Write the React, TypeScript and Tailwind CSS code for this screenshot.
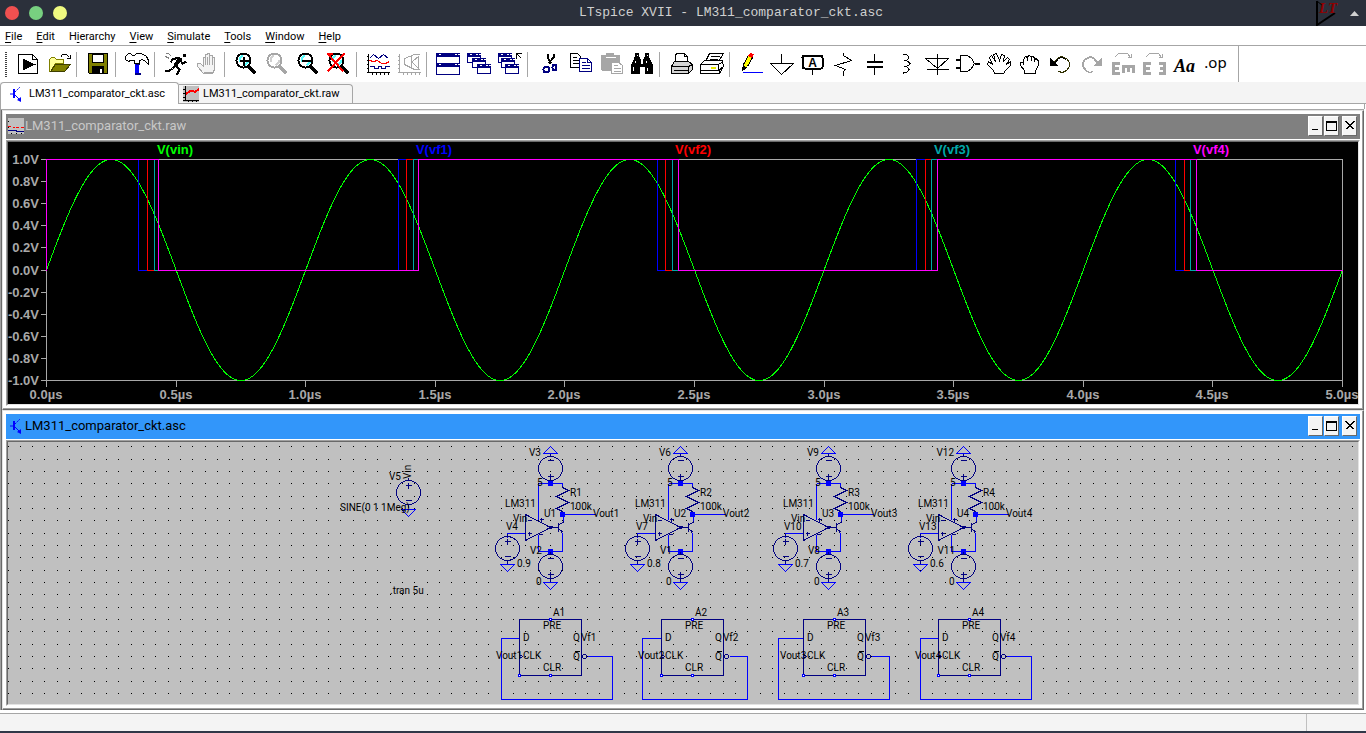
import { ReactNode } from "react";

const NAVY = "#000080";
const BLUE = "#0000ff";
const GRAY = "#a6a6a6";

const MENUS = [
  ["", "F", "ile"],
  ["", "E", "dit"],
  ["H", "i", "erarchy"],
  ["", "V", "iew"],
  ["", "S", "imulate"],
  ["", "T", "ools"],
  ["", "W", "indow"],
  ["", "H", "elp"],
];

/* ---------- toolbar icons ---------- */

const Magnifier = ({ color = "#000", glass = "#55ffff", children }: { color?: string; glass?: string; children?: ReactNode }) => (
  <>
    <path d="M15 14L22 21" stroke={color} strokeWidth="3" />
    <circle cx="10" cy="8" r="7" fill="#fff" stroke={color} strokeWidth="2" />
    <path d="M6 9V6L9 3M14 7V10L11 13" stroke={glass} strokeWidth="2" />
    {children}
  </>
);

const MiniWindow = ({ x, y, w, h }: { x: number; y: number; w: number; h: number }) => (
  <>
    <rect x={x} y={y} width={w} height={h} fill="#fff" stroke={NAVY} />
    <path d={`M${x} ${y + 1}H${x + w}M${x} ${y + 2}H${x + w}M${x} ${y + 3}H${x + w}`} stroke={NAVY} />
    <path d={`M${x + 2} ${y + 1}h2M${x + w - 5} ${y + 1}h2M${x + w - 2} ${y + 1}h2`} stroke="#fff" />
  </>
);

const ICONS: Record<string, ReactNode> = {
  Run: (
    <>
      <path d="M3 2H17L22 7V21H3Z" fill="#fff" stroke="#000" />
      <path d="M17 2V7H22" stroke="#000" />
      <path d="M8 7V17L19 12Z" fill="#000" stroke="#000" />
    </>
  ),
  Open: (
    <>
      <path d="M3 19V7L5 5H8L10 7H17V11H9L4 19Z" fill="#ffff99" stroke="#808000" />
      <path d="M4 19L9 12H24L18 19Z" fill="#808000" stroke="#404000" />
      <path d="M14 5L16 2H20L23 5M24 2V6H20" stroke="#000" />
    </>
  ),
  Save: (
    <>
      <path d="M3 1H22V21H4L3 20Z" fill="#808000" stroke="#000" />
      <rect x="7" y="2" width="11" height="8" fill="#fff" stroke="#000" />
      <rect x="7" y="14" width="11" height="7" fill="#000" stroke="#000" />
      <path d="M15 16V20M16 16V20" stroke="#fff" />
    </>
  ),
  "Control panel": (
    <>
      <path d="M11 10V22M12 10V22M13 10V22M14 10V22" stroke={BLUE} />
      <path d="M11 12H15M10 21H16M10 22H16" stroke={NAVY} />
      <path d="M1 4L4 1H6L8 3H10L12 1H17L22 4L24 8V12L21 9L18 7L15 8V11H10V8H6L4 9L1 7Z" fill="#fff" stroke="#000" />
    </>
  ),
  Simulate: (
    <>
      <path d="M19 2H22M19 3H22" stroke="#000" strokeWidth="2" />
      <path d="M17 5L12 13" stroke="#000" strokeWidth="4" />
      <path d="M15 5L9 7L7 10M17 8L19 11L23 9M12 13L16 17L14 21H12M12 13L9 16L6 18H1" stroke="#000" strokeWidth="2" />
      <path d="M2 1H5L8 4M2 4L6 6" stroke="#808080" />
    </>
  ),
  Halt: (
    <>
      <path d="M9 21L3 14V11H6L9 14V5H11V2H13V1H15V3H18V5H20V17L18 21Z" fill="#f4f4f4" stroke={GRAY} />
      <path d="M11 5V12M15 3V12M18 5V12M13 4V12M9 21H18M9 20H18" stroke={GRAY} />
    </>
  ),
  "Zoom in": (
    <Magnifier>
      <path d="M6 8H15M10 4V13" stroke="#000" strokeWidth="2" />
    </Magnifier>
  ),
  Pan: <Magnifier color={GRAY} glass="#d0d0d0" />,
  "Zoom out": (
    <Magnifier>
      <path d="M6 8H15" stroke="#000" strokeWidth="2" />
    </Magnifier>
  ),
  "Zoom to fit": (
    <Magnifier>
      <path d="M1 1L17 19M18 1L1 19M2 1H6M14 5L9 10" stroke="#f00" strokeWidth="2" />
    </Magnifier>
  ),
  "Autorange plot": (
    <>
      <path d="M3 1V20M1 20H24M1 4H3M1 8H3M1 12H3M1 16H3M7 20V22M11 20V22M15 20V22M19 20V22M23 20V22" stroke="#000" />
      <path d="M4 6L8 2L13 6L18 2L23 6M4 14H9V16H13V14H16V16H20V14H24" stroke={NAVY} />
      <path d="M4 8L8 9L12 8L16 11H20L24 9" stroke="#f00" />
    </>
  ),
  "Smith chart": (
    <>
      <path d="M3 1V20M1 20H24M1 4H3M1 8H3M1 12H3M1 16H3M7 20V22M11 20V22M15 20V22M19 20V22M23 20V22" stroke={GRAY} />
      <path d="M23 2H18L8 6V12L18 17H23M15 3V16M16 9L22 4V16L16 10" stroke={GRAY} />
    </>
  ),
  "Tile windows": (
    <>
      <MiniWindow x={1} y={1} w={23} h={10} />
      <MiniWindow x={1} y={11} w={23} h={11} />
    </>
  ),
  "Cascade windows": (
    <>
      <MiniWindow x={1} y={1} w={13} h={9} />
      <MiniWindow x={6} y={6} w={13} h={9} />
      <MiniWindow x={11} y={12} w={13} h={9} />
    </>
  ),
  "Close windows": (
    <>
      <MiniWindow x={1} y={1} w={13} h={9} />
      <MiniWindow x={4} y={6} w={13} h={9} />
      <MiniWindow x={8} y={12} w={13} h={9} />
      <path d="M19 6V1H24M19 1L24 6" stroke="#000" />
    </>
  ),
  Cut: (
    <>
      <path d="M11 1V5L15 11M17 1V5L12 11" stroke="#000" strokeWidth="2" />
      <ellipse cx="10" cy="17" rx="3" ry="3" stroke={NAVY} strokeWidth="2" />
      <ellipse cx="18" cy="15" rx="2" ry="3" stroke={NAVY} strokeWidth="2" />
    </>
  ),
  Copy: (
    <>
      <path d="M3 1H10L13 4V15H3Z" fill="#fff" stroke="#000" />
      <path d="M5 5H9M5 8H11M5 11H11" stroke="#000" />
      <path d="M12 6H20L24 10V19H12Z" fill="#fff" stroke={NAVY} />
      <path d="M20 6V10H24M14 10H18M14 13H22M14 16H22" stroke={NAVY} />
    </>
  ),
  Paste: (
    <>
      <path d="M3 3H8V1H15V3H21V18H4L3 17Z" fill={GRAY} stroke={GRAY} />
      <path d="M7 5H17" stroke="#fff" />
      <path d="M13 10H20L24 13V21H13Z" fill="#fff" stroke={GRAY} />
      <path d="M15 13H19M15 16H22M15 19H22" stroke={GRAY} />
    </>
  ),
  Find: (
    <>
      <path d="M6 1H9V4L11 7V12H14V7L16 4V1H19V4L23 13V21H16V14H10V21H2V13L6 4Z" fill="#000" stroke="#000" />
      <path d="M7 3H8M17 3H18M6 8V10M17 8V10M4 14V18M18 15V18" stroke="#fff" />
    </>
  ),
  Print: (
    <>
      <path d="M7 10V3L8 1H16L19 4V10" fill="#fff" stroke="#000" />
      <path d="M3 14L6 9H20L24 12V17L20 21H3Z" fill="#d4d4d4" stroke="#000" />
      <path d="M3 14H20V21M5 18H20M20 14L24 12M16 1V4H19" stroke="#000" />
    </>
  ),
  "Print setup": (
    <>
      <path d="M6 9L10 1H24L19 9" fill="#fff" stroke="#000" />
      <path d="M11 4H20M10 7H18" stroke="#000" />
      <path d="M1 12L5 8H23L24 14L20 21H1Z" fill="#fff" stroke="#000" />
      <path d="M1 12H19L24 9M1 18H20V21M19 12V18L24 14" stroke="#000" />
      <path d="M11 15H16" stroke="#e8e800" strokeWidth="2" />
    </>
  ),
  Wire: (
    <>
      <path d="M4 18L5 12L10 3L14 5L9 14Z" fill="#ffff00" stroke="#000" />
      <path d="M4 18L5 14L8 15Z" fill="#000" stroke="#000" />
      <path d="M10 3L12 1L15 2L13 5Z" fill="#f00" stroke="#f00" />
      <path d="M4 20H25" stroke={BLUE} />
    </>
  ),
  Ground: <path d="M12 1V11M1 11H24L12 22L1 11" stroke="#000" />,
  "Label net": (
    <>
      <rect x="2" y="3" width="20" height="13" rx="2" stroke="#000" strokeWidth="2" />
      <path d="M12 17V22" stroke="#000" />
      <text x="12" y="14" textAnchor="middle" fontSize="12" fontWeight="700" fill="#000" fontFamily="Liberation Sans, sans-serif">A</text>
    </>
  ),
  Resistor: <path d="M12 0V3L20 8L4 13L14 17L12 19V23" stroke="#000" />,
  Capacitor: (
    <>
      <path d="M12 1V8M12 15V22" stroke="#000" />
      <path d="M4 9H20M4 14H20" stroke="#000" strokeWidth="2" />
    </>
  ),
  Inductor: (
    <path
      d="M10 1V2H13L15 4V6L13 8H10M13 8L16 10V12L13 14H10M13 14L15 16V18L13 20H10V21M14 3L16 5M15 10L17 11L15 13M14 15L16 17L14 19"
      stroke="#000"
    />
  ),
  Diode: <path d="M13 1V22M1 6H24L13 16ZM2 17H24" stroke="#000" />,
  Component: (
    <>
      <path d="M5 3H12L16 6L19 11L16 16L12 19H5Z" stroke="#000" />
      <path d="M0 7H5M0 15H5M19 11H24" stroke="#000" strokeWidth="2" />
    </>
  ),
  Move: (
    <path
      d="M8 21L7 18L1 12L2 9L6 12L3 5L5 3L9 9L7 2L10 1L13 8L15 2L18 3L17 9L21 5L23 7L20 12L24 9V13L19 18L17 21Z"
      fill="#fff"
      stroke="#000"
    />
  ),
  Drag: <path d="M7 21V18L3 13V10H6V12V7L8 4L10 5V8V4L12 3L14 5V8V4L16 4L17 6V9L18 6L20 7L21 9V13L18 18V21Z" fill="#fff" stroke="#000" />,
  Undo: (
    <>
      <path d="M5 11L9 6L13 4L18 6L21 10V14L18 18L14 20L10 19" stroke="#303000" />
      <path d="M6 11L10 6L13 5L18 7" stroke="#000" />
      <path d="M2 6V13H9Z" fill="#000" stroke="#000" />
    </>
  ),
  Redo: (
    <>
      <path d="M19 11L15 6L11 4L6 6L3 10V14L6 18L10 20L14 19" stroke={GRAY} />
      <path d="M18 11L14 6L11 5L6 7L4 10V14L7 18" stroke={GRAY} />
      <path d="M22 6V13H15Z" fill={GRAY} stroke={GRAY} />
    </>
  ),
  Rotate: (
    <>
      <path d="M4 5L8 1H17L20 5M21 1V5H17" stroke={GRAY} />
      <path d="M9 11H3V21H9M3 16H8M13 20V14H24M23 14V20M18 14V19" stroke={GRAY} strokeWidth="3" />
    </>
  ),
  Mirror: (
    <>
      <path d="M4 5L8 1H17L20 5M21 1V5H17" stroke={GRAY} />
      <path d="M9 11H3V21H9M3 16H8M17 11H23V21H17M23 16H18" stroke={GRAY} strokeWidth="3" />
    </>
  ),
};

const TOOL_GROUPS = [
  ["Run", "Open"],
  ["Save"],
  ["Control panel"],
  ["Simulate", "Halt"],
  ["Zoom in", "Pan", "Zoom out", "Zoom to fit"],
  ["Autorange plot", "Smith chart"],
  ["Tile windows", "Cascade windows", "Close windows"],
  ["Cut", "Copy", "Paste", "Find"],
  ["Print", "Print setup"],
  ["Wire", "Ground", "Label net", "Resistor", "Capacitor", "Inductor", "Diode", "Component", "Move", "Drag", "Undo", "Redo", "Rotate", "Mirror"],
];

const TransistorIcon = () => (
  <svg width="16" height="16" viewBox="0 0 16 16" fill="none" stroke={BLUE} aria-hidden="true">
    <path d="M2 8H6M7 9L11 13" strokeWidth="1" />
    <path d="M6 3V12" strokeWidth="2" />
    <path d="M7 6L12 1" strokeDasharray="2 1" />
    <path d="M13 16V11L9 14Z" fill={BLUE} stroke="none" />
  </svg>
);

const WaveIcon = () => (
  <svg width="16" height="16" viewBox="0 0 16 16" fill="none" shapeRendering="crispEdges" aria-hidden="true">
    <path d="M0 0H16V16H0Z" fill="#c0c0c0" />
    <path d="M2 0V14M0 14H16M0 3H2M0 7H2M0 11H2M5 14V16M9 14V16M13 14V16" stroke="#000" />
    <path d="M3 8L7 5H10L12 6L16 3" stroke="#f00" strokeWidth="2" />
  </svg>
);

const PlotDocIcon = () => (
  <svg width="16" height="16" viewBox="0 0 16 16" fill="none" shapeRendering="crispEdges" aria-hidden="true">
    <path d="M0 0H16V16H0Z" fill="#c0c0c0" />
    <path d="M0 8.500H3M5 9.500H7M8 9.500H11M13 9.500H16" stroke="#f00" />
    <path d="M0 12.500H8V13.500H16" stroke={NAVY} />
    <path d="M3 15.500h1M8 15.500h1M13 15.500h1M0 3.500h1M0 9.500h1" stroke="#000" />
  </svg>
);

/* ---------- windows ---------- */

interface DocWindowProps {
  title: string;
  icon: ReactNode;
  active?: boolean;
  children: ReactNode;
}

const CAPTION_ICONS: Record<string, string> = {
  Minimize: "M2 12H8",
  Maximize: "M1 4H11V13H1ZM1 5H11",
  Close: "M2 4L10 12M10 4L2 12M3 4L11 12M11 4L3 12",
};

const CaptionButton = ({ label }: { label: string }) => (
  <button
    type="button"
    aria-label={label}
    className="flex h-5 w-[15px] items-start justify-center border border-t-white border-r-[#696969] border-b-[#696969] border-l-white bg-[#f4f4f4]">
    <svg width="13" height="18" viewBox="0 0 13 18" className="shrink-0" fill="none" stroke="#000" shapeRendering="crispEdges">
      <path transform="translate(.5 .5)" d={CAPTION_ICONS[label]} />
    </svg>
  </button>
);

const DocWindow = ({ title, icon, active, children }: DocWindowProps) => (
  <section className="border-t border-r border-b border-l border-t-[#e3e3e3] border-r-[#696969] border-b-[#696969] border-l-[#e3e3e3] bg-white">
    <div className="border-r border-b border-r-[#a0a0a0] border-b-[#a0a0a0] pt-[3px] pr-0.5 pb-0.5 pl-[3px]">
      <header
        className={`flex h-[25px] items-center pr-[3px] pb-px pl-0.5 ${active ? "bg-[#3296fa] text-black" : "bg-[#808080] text-[#c8c8c8]"}`}>
        {icon}
        <h2 className="ml-px flex-1 text-[13px]">{title}</h2>
        <CaptionButton label="Minimize" />
        <span className="w-px" />
        <CaptionButton label="Maximize" />
        <span className="w-[3px]" />
        <CaptionButton label="Close" />
      </header>
      <div className="mt-px border border-t-[#a0a0a0] border-r-white border-b-white border-l-[#a0a0a0]">
        <div className="border border-t-[#696969] border-r-[#e3e3e3] border-b-[#e3e3e3] border-l-[#696969]">{children}</div>
      </div>
    </div>
  </section>
);

/* ---------- waveform plot ---------- */

const PLOT = { left: 38, right: 1334, top: 17, zero: 128, bottom: 238 };
const PER_US = (PLOT.right - PLOT.left) / 5;

const sinePath = () => {
  const points: string[] = [];
  for (let x = PLOT.left; x <= PLOT.right; x++) {
    const v = Math.sin((2 * Math.PI * (x - PLOT.left)) / PER_US);
    points.push(`${x} ${(127.5 - 110.5 * v).toFixed(2)}`);
  }
  return `M${points.join("L")}`;
};

// x positions where each output toggles: fall, rise, fall, rise, fall
const TRACES = [
  { name: "V(vf1)", color: "#0000ff", edges: [130, 390, 649, 908, 1167] },
  { name: "V(vf2)", color: "#ff0000", edges: [139, 398, 657, 917, 1176] },
  { name: "V(vf3)", color: "#00a8a8", edges: [146, 405, 664, 923, 1182] },
  { name: "V(vf4)", color: "#ff00ff", edges: [150, 410, 670, 929, 1188] },
];

const squarePath = (edges: number[]) => {
  let d = `M${PLOT.left} ${PLOT.zero}V${PLOT.top}`;
  edges.forEach((x, i) => {
    d += `H${x}V${i % 2 ? PLOT.top : PLOT.zero}`;
  });
  return `${d}H${PLOT.right}`;
};

const LEGEND = [{ name: "V(vin)", color: "#00ff00" }, ...TRACES];

const Plot = () => (
  <svg viewBox="0 0 1350 262" className="block w-full bg-black" fontFamily="Liberation Sans, Arial, sans-serif" fontSize="13" fontWeight="700">
    <g transform="translate(.5 .5)" fill="none" shapeRendering="crispEdges">
      <rect x={PLOT.left} y={PLOT.top} width={PLOT.right - PLOT.left} height={PLOT.bottom - PLOT.top} stroke="#a8a8a8" />
      {Array.from({ length: 11 }, (_, i) => (
        <path key={i} d={`M32 ${Math.round(17 + i * 22.11)}H38M${Math.round(38 + i * 129.6)} 238V244`} stroke="#a8a8a8" />
      ))}
      <path d={sinePath()} stroke="#00ff00" />
      {TRACES.map((trace) => (
        <path key={trace.name} d={squarePath(trace.edges)} stroke={trace.color} />
      ))}
    </g>
    {LEGEND.map((item, i) => (
      <text key={item.name} x={167 + i * 259} y="12" textAnchor="middle" fill={item.color}>
        {item.name}
      </text>
    ))}
    <g fill="#a8a8a8">
      {Array.from({ length: 11 }, (_, i) => (
        <text key={i} x="31" y={Math.round(22 + i * 22.11)} textAnchor="end">
          {`${((5 - i) / 5).toFixed(1)}V`}
        </text>
      ))}
      {Array.from({ length: 11 }, (_, i) => (
        <text key={i} x={Math.round(38 + i * 129.6)} y="257" textAnchor="middle">
          {`${(i / 2).toFixed(1)}µs`}
        </text>
      ))}
    </g>
  </svg>
);

/* ---------- schematic ---------- */

const gridDots = () => {
  let d = "";
  for (let row = 0; row < 21; row++) {
    for (let col = 0; col < 110; col++) {
      d += `M${Math.max(0, Math.floor(col * 12.3334 - 0.3))} ${4 + Math.floor(row * 12.3334 + 0.67)}h1`;
    }
  }
  return d;
};

// Voltage source centred on x, y; flipped puts the minus sign on top.
const Source = ({ x, y, flipped }: { x: number; y: number; flipped?: boolean }) => (
  <g transform={`translate(${x} ${y})`} stroke={NAVY}>
    <circle r="12" />
    <path d={flipped ? "M-3 -8H3M-3 8H3M0 5V11" : "M-3 -7H3M0 -10V-4M-3 8H3"} />
    <path d="M0 -15V-12M0 12V15" />
  </g>
);

const Ground = ({ x, y, up }: { x: number; y: number; up?: boolean }) => (
  <path d={`M${x - 7} ${y}H${x + 7}L${x} ${up ? y - 7 : y + 7}Z`} stroke={BLUE} />
);

const Joint = ({ x, y }: { x: number; y: number }) => <rect x={x - 2} y={y - 2} width="4" height="4" fill={BLUE} stroke={BLUE} />;

interface StageProps {
  dx: number;
  n: number;
  top: string;
  bottom: string;
  level: string;
  source: string;
}

const STAGES: StageProps[] = [
  { n: 1, dx: 0, top: "V3", bottom: "V2", source: "V4", level: "0.9" },
  { n: 2, dx: 130, top: "V6", bottom: "V1", source: "V7", level: "0.8" },
  { n: 3, dx: 278, top: "V9", bottom: "V8", source: "V10", level: "0.7" },
  { n: 4, dx: 413, top: "V12", bottom: "V11", source: "V13", level: "0.6" },
];

const Stage = ({ dx, n, top, bottom, source, level }: StageProps) => (
  <g transform={`translate(${dx} 0)`}>
    <g transform="translate(.5 .5)" fill="none" shapeRendering="crispEdges">
      <Ground x={542} y={11} up />
      <Source x={542} y={26} flipped />
      <path d="M530 41H554M530 41V77M554 41V43M554 72H587M555 74V78M530 109H554M530 92V109M554 90V109M517 91H499V95" stroke={BLUE} />
      <path d="M554 43V45L560 48L548 54L560 60L548 66L554 69V72" stroke={NAVY} />
      <path d="M517 72V98L542 85ZM542 85H550M555 78V80L550 82M550 80V89M550 86L554 90M519 78H523M519 91H523M521 89V93M531 77H535M533 75V79M530 92H534M552 89H554M553 87V90M541 84H544M541 86H543" stroke={NAVY} />
      <Joint x={542} y={41} />
      <Joint x={554} y={72} />
      <Joint x={542} y={109} />
      <Source x={542} y={124} flipped />
      <Ground x={542} y={140} />
      <Source x={499} y={106} />
      <Ground x={499} y={122} />
    </g>
    <text x="533" y="14" textAnchor="end">{top}</text>
    <text x="529" y="44">5</text>
    <text x="497" y="65">LM311</text>
    <text x="536" y="75">U{n}</text>
    <text x="562" y="54">R{n}</text>
    <text x="562" y="68">100k</text>
    <text x="585" y="75">Vout{n}</text>
    <text x="505" y="80">Vin</text>
    <text x="498" y="88">{source}</text>
    <text x="509" y="125">{level}</text>
    <text x="534" y="112" textAnchor="end">{bottom}</text>
    <text x="528" y="143">0</text>
  </g>
);

const FLIPFLOPS = [
  { n: 1, x: 511, left: 493, right: 604 },
  { n: 2, x: 653, left: 634, right: 739 },
  { n: 3, x: 795, left: 770, right: 881 },
  { n: 4, x: 930, left: 912, right: 1023 },
];

const FlipFlop = ({ n, x, left, right }: { n: number; x: number; left: number; right: number }) => (
  <>
    <g transform="translate(.5 .5)" fill="none" shapeRendering="crispEdges">
      <path d={`M${x} 196H${left}V257H${right}V214H${x + 68}`} stroke={BLUE} />
      <rect x={x} y="177" width="62" height="56" stroke={NAVY} />
      <circle cx={x + 65} cy="214" r="2" stroke={NAVY} />
      <path d={`M${x} 212L${x + 3} 214L${x} 216`} stroke={NAVY} />
      <path d={`M${x + 55} 209H${x + 60}`} stroke="#000" />
      {[[31, 177], [0, 233], [31, 233]].map(([px, py]) => (
        <rect key={`${px}-${py}`} x={x + px - 1} y={py - 1} width="2" height="2" fill="#fff" stroke={BLUE} />
      ))}
    </g>
    <g transform={`translate(${x} 0)`}>
      <text x="34" y="174">A{n}</text>
      <text x="24" y="187">PRE</text>
      <text x="4" y="199">D</text>
      <text x="54" y="199">Q</text>
      <text x="62" y="199">Vf{n}</text>
      <text x="-23" y="217">Vout{n}</text>
      <text x="4" y="217">CLK</text>
      <text x="54" y="218">Q</text>
      <text x="24" y="229">CLR</text>
    </g>
  </>
);

const Schematic = () => (
  <svg viewBox="0 0 1350 262" className="block w-full bg-[#c0c0c0]" fontFamily="Roboto, sans-serif" fontSize="10" fill="#000">
    <path d={gridDots()} transform="translate(0 .5)" stroke="#000" shapeRendering="crispEdges" />
    <g transform="translate(.5 .5)" fill="none" shapeRendering="crispEdges">
      <Source x={400} y={50} />
      <Ground x={400} y={67} />
    </g>
    <text transform="translate(403 37) rotate(-90)">Vin</text>
    <text x="381" y="38">V5</text>
    <text x="332" y="69">SINE(0 1 1Meg)</text>
    <text x="382" y="152">.tran 5u</text>
    {STAGES.map((stage) => (
      <Stage key={stage.n} {...stage} />
    ))}
    {FLIPFLOPS.map((item) => (
      <FlipFlop key={item.n} {...item} />
    ))}
  </svg>
);

/* ---------- app ---------- */

const App = () => (
  <div className="flex min-h-screen flex-col bg-white font-[Roboto,sans-serif] text-[11px] text-black">
    <header className="flex h-[26px] items-center bg-[#2b303b] px-[5px]">
      <div className="flex flex-1 gap-2.5">
        <button type="button" aria-label="Close window" className="size-3.5 rounded-full bg-[#f05050]" />
        <button type="button" aria-label="Minimize window" className="size-3.5 rounded-full bg-[#78d080]" />
        <button type="button" aria-label="Maximize window" className="size-3.5 rounded-full bg-[#f0fa80]" />
      </div>
      <h1 className="ml-24 font-['Liberation_Mono',monospace] text-[13px] text-[#d0d0d0]">LTspice XVII - LM311_comparator_ckt.asc</h1>
      <div className="flex flex-1 items-center justify-end gap-2.5">
        <svg width="24" height="26" viewBox="0 0 24 26" fill="none" aria-hidden="true">
          <path d="M1 1V25L19 13" stroke="#000" strokeWidth="2" />
          <path d="M1 1L7 6" stroke="#000" />
          <text x="3" y="13" fontFamily="Liberation Serif, serif" fontSize="15" fontWeight="700" fontStyle="italic" fill="#900000">LT</text>
        </svg>
        <svg width="9" height="5" viewBox="0 0 9 5" aria-hidden="true" className="mr-0.5">
          <path d="M0 5L4.500 0L9 5Z" fill="#d0d0d0" />
        </svg>
      </div>
    </header>

    <nav className="flex h-5 items-center gap-3.5 border-b border-[#a6a6a6] px-[5px] pt-1">
      {MENUS.map(([before, key, after]) => (
        <button key={key + after} type="button">
          {before}
          <span className="underline underline-offset-2">{key}</span>
          {after}
        </button>
      ))}
    </nav>

    <div className="flex h-9 items-start">
      <div className="flex items-start self-stretch border-r border-[#a6a6a6] pr-[7px]">
        <span className="mt-1.5 mr-[5px] ml-[5px] h-[26px] w-0.5 bg-[repeating-linear-gradient(#404040_0_1px,#fff_1px_2px)]" />
        {TOOL_GROUPS.map((group, i) => (
          <div key={group[0]} className="flex">
            {i > 0 && <span className="mt-1.5 mr-[5px] ml-0.5 h-[25px] w-px bg-[#a6a6a6]" />}
            {group.map((name) => (
              <button key={name} type="button" aria-label={name} className="flex w-[31px] justify-center pt-1.5">
                <svg width="25" height="25" viewBox="0 0 25 25" fill="none" shapeRendering="crispEdges">
                  <g transform="translate(.5 .5)">{ICONS[name]}</g>
                </svg>
              </button>
            ))}
          </div>
        ))}
        <button type="button" className="w-[31px] pt-2 font-['Liberation_Serif',serif] text-[18px] leading-6 font-bold italic">
          Aa
        </button>
        <button type="button" className="w-[31px] pt-1 font-['Noto_Sans',sans-serif] text-[15px] leading-6">
          .op
        </button>
      </div>
    </div>

    <div className="flex h-[22px] bg-[#f4f4f4]">
      <button type="button" className="flex w-[179px] items-center gap-[5px] rounded-t-sm border border-b-0 border-[#a6a6a6] bg-white pt-px pl-[7px]">
        <TransistorIcon />
        LM311_comparator_ckt.asc
      </button>
      <div className="flex flex-1 items-end border-b border-[#a6a6a6]">
        <button type="button" className="flex h-[19px] w-[174px] items-center gap-1 rounded-tr-sm border-t border-r border-[#a6a6a6] pl-1">
          <WaveIcon />
          LM311_comparator_ckt.raw
        </button>
      </div>
    </div>
    <div className="mr-px h-[5px] border-r border-l border-[#a6a6a6]" />

    <main className="mr-0.5 border-t border-l border-t-[#a6a6a6] border-l-[#a0a0a0]">
      <div className="border-l border-[#696969]">
        <DocWindow title="LM311_comparator_ckt.raw" icon={<PlotDocIcon />}>
          <Plot />
        </DocWindow>
        <DocWindow title="LM311_comparator_ckt.asc" icon={<TransistorIcon />} active>
          <Schematic />
        </DocWindow>
      </div>
    </main>

    <footer className="mt-[3px] flex min-h-5 flex-1 border-t border-b-2 border-t-[#a6a6a6] border-b-[#303848] bg-[#f4f4f4]">
      <div className="flex-1" />
      <div className="w-[60px] border-l border-[#c0c0c0]" />
    </footer>
  </div>
);

export default App;
